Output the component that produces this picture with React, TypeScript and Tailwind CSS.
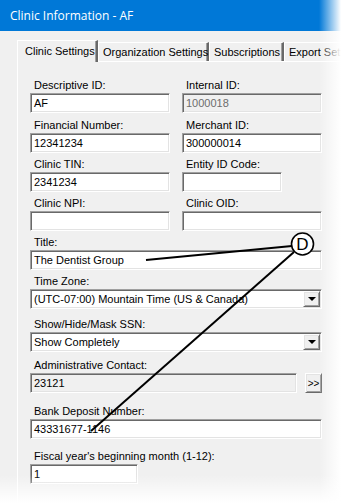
import React from 'react';

const ui = { fontFamily: '"Liberation Sans", Arial, sans-serif' };

const sunken =
  'border border-t-[#a0a0a0] border-l-[#a0a0a0] border-b-white border-r-white shadow-[inset_1px_1px_0_#696969,inset_-1px_-1px_0_#e3e3e3]';
const raised =
  'border border-t-white border-l-white border-b-[#696969] border-r-[#696969] shadow-[inset_1px_1px_0_#e3e3e3,inset_-1px_-1px_0_#a0a0a0]';

const Field: React.FC<{ value?: string; className?: string; readOnly?: boolean; muted?: boolean }> = ({
  value = '',
  className = '',
  readOnly,
  muted,
}) => (
  <div
    className={`h-[20px] flex items-center pl-[3px] text-[11px] leading-none whitespace-nowrap overflow-hidden ${sunken} ${
      readOnly ? 'bg-[#f0f0f0]' : 'bg-white'
    } ${muted ? 'text-[#6d6d6d]' : 'text-black'} ${className}`}
  >
    {value}
  </div>
);

const Label: React.FC<{ text: string }> = ({ text }) => (
  <div className="h-[14px] mb-[1px] pl-[4px] text-[11px] leading-[14px] text-black whitespace-nowrap">{text}</div>
);

const Select: React.FC<{ value: string }> = ({ value }) => (
  <div className={`h-[20px] w-[292px] flex items-center bg-white ${sunken}`}>
    <div className="flex-1 pl-[3px] text-[11px] leading-none whitespace-nowrap overflow-hidden">{value}</div>
    <div className={`w-[17px] h-[16px] mr-[1px] flex items-center justify-center bg-[#f0f0f0] ${raised}`}>
      <div className="w-0 h-0 border-l-[4px] border-r-[4px] border-t-[4px] border-l-transparent border-r-transparent border-t-black" />
    </div>
  </div>
);

const Tab: React.FC<{ label: string; active?: boolean; width: string }> = ({ label, active, width }) => (
  <div
    className={`${width} flex items-center whitespace-nowrap text-[11px] bg-[#f0f0f0] border-t border-l border-t-white border-l-white border-r-2 border-r-[#696969] shadow-[inset_-1px_0_0_#a0a0a0] ${
      active ? 'h-[22px] pl-[7px] relative z-10 -mb-[1px]' : 'h-[19px] pl-[4px]'
    }`}
  >
    {label}
  </div>
);

export default function App() {
  return (
    <div className="relative w-[341px] h-[503px] overflow-hidden bg-[#f0f0f0]" style={ui}>
      {/* title bar */}
      <div className="h-[31px] bg-[#0078d7] flex items-center pl-[10px]">
        <span className="text-white text-[12px]" style={{ fontFamily: '"Open Sans", "Noto Sans", sans-serif' }}>
          Clinic Information - AF
        </span>
      </div>

      <div className="flex h-[472px]">
        <div className="w-[2px] bg-[#0078d7]" />
        <div className="flex-1 pl-[17px] pt-[8px]">
          {/* tabs */}
          <div className="flex items-end h-[22px]">
            <Tab label="Clinic Settings" active width="w-[81px]" />
            <Tab label="Organization Settings" width="w-[111px]" />
            <Tab label="Subscriptions" width="w-[75px]" />
            <Tab label="Export Settings" width="w-[80px]" />
          </div>

          {/* panel */}
          <div className="w-[330px] h-[450px] border-t border-l border-white pl-[12px] pt-[16px]">
            <div className="flex gap-[12px]">
              <div className="w-[140px]">
                <Label text="Descriptive ID:" />
                <Field value="AF" />
              </div>
              <div className="w-[140px]">
                <Label text="Internal ID:" />
                <Field value="1000018" readOnly muted />
              </div>
            </div>

            <div className="flex gap-[12px] mt-[5px]">
              <div className="w-[140px]">
                <Label text="Financial Number:" />
                <Field value="12341234" />
              </div>
              <div className="w-[140px]">
                <Label text="Merchant ID:" />
                <Field value="300000014" />
              </div>
            </div>

            <div className="flex gap-[12px] mt-[4px]">
              <div className="w-[140px]">
                <Label text="Clinic TIN:" />
                <Field value="2341234" />
              </div>
              <div className="w-[140px]">
                <Label text="Entity ID Code:" />
                <Field className="w-[100px]" />
              </div>
            </div>

            <div className="flex gap-[12px] mt-[4px]">
              <div className="w-[140px]">
                <Label text="Clinic NPI:" />
                <Field />
              </div>
              <div className="w-[140px]">
                <Label text="Clinic OID:" />
                <Field />
              </div>
            </div>

            <div className="mt-[4px]">
              <Label text="Title:" />
              <Field value="The Dentist Group" className="w-[292px]" />
            </div>

            <div className="mt-[4px]">
              <Label text="Time Zone:" />
              <Select value="(UTC-07:00) Mountain Time (US & Canada)" />
            </div>

            <div className="mt-[8px]">
              <Label text="Show/Hide/Mask SSN:" />
              <Select value="Show Completely" />
            </div>

            <div className="mt-[6px]">
              <Label text="Administrative Contact:" />
              <div className="flex items-center gap-[8px]">
                <Field value="23121" readOnly className="w-[267px]" />
                <div className={`w-[17px] h-[20px] flex items-center justify-center text-[10px] bg-[#f0f0f0] ${raised}`}>
                  &gt;&gt;
                </div>
              </div>
            </div>

            <div className="mt-[11px]">
              <Label text="Bank Deposit Number:" />
              <Field value="43331677-1146" className="w-[292px]" />
            </div>

            <div className="mt-[10px]">
              <Label text="Fiscal year's beginning month (1-12):" />
              <Field value="1" className="w-[108px]" />
            </div>
          </div>
        </div>
      </div>

      {/* callout */}
      <svg className="absolute inset-0 pointer-events-none" width="341" height="503" viewBox="0 0 341 503">
        <line x1="146" y1="260" x2="292" y2="246" stroke="#000" strokeWidth="2" />
        <line x1="294" y1="252" x2="91" y2="431" stroke="#000" strokeWidth="2" />
        <circle cx="302.5" cy="244" r="11" fill="#fff" stroke="#000" strokeWidth="1.6" />
        <text x="302.5" y="250" textAnchor="middle" fontSize="17" fontFamily="Liberation Sans, Arial, sans-serif">
          D
        </text>
      </svg>

      {/* edge fades */}
      <div className="absolute top-0 right-0 bottom-0 w-[22px] bg-gradient-to-r from-transparent to-white pointer-events-none" />
      <div className="absolute left-0 right-0 bottom-0 h-[28px] bg-gradient-to-b from-transparent to-white pointer-events-none" />
    </div>
  );
}
